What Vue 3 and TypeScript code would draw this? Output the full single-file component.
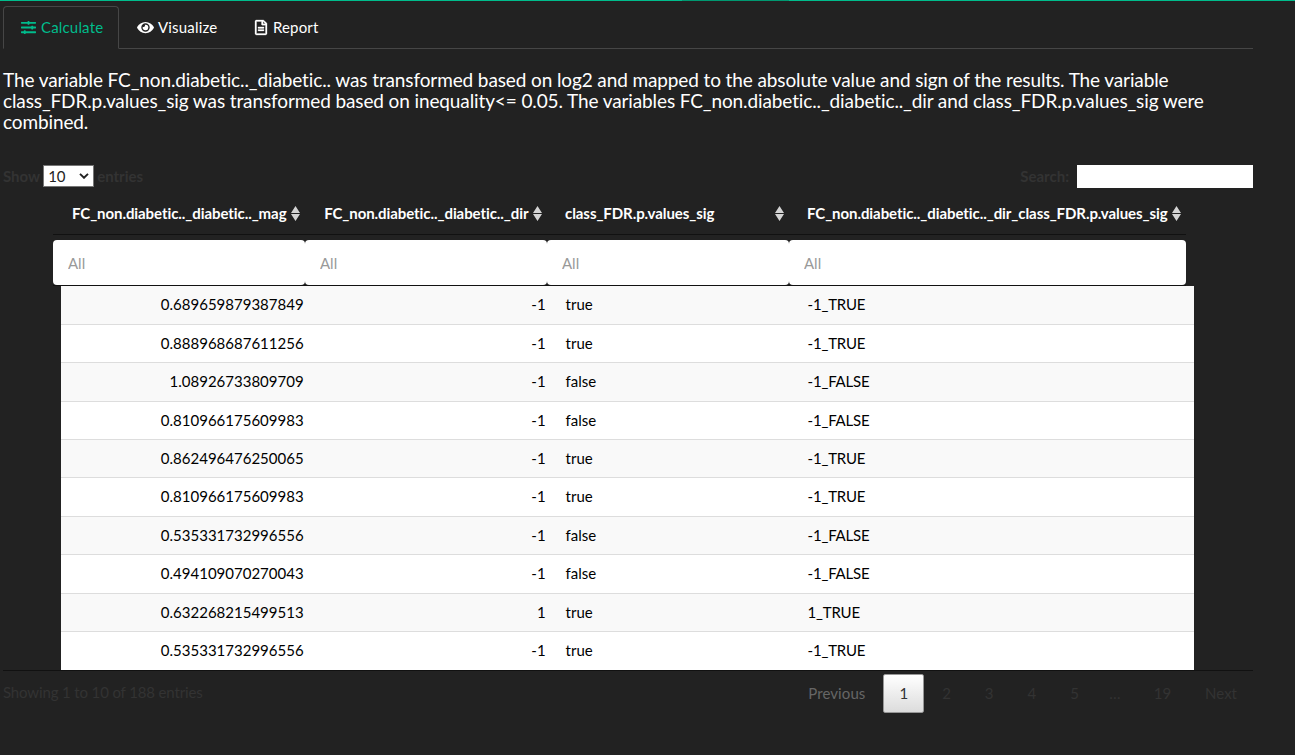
<script setup lang="ts">
import { ref } from 'vue'

interface Column {
  name: string
  numeric: boolean
}

const columns: Column[] = [
  { name: 'FC_non.diabetic.._diabetic.._mag', numeric: true },
  { name: 'FC_non.diabetic.._diabetic.._dir', numeric: true },
  { name: 'class_FDR.p.values_sig', numeric: false },
  { name: 'FC_non.diabetic.._diabetic.._dir_class_FDR.p.values_sig', numeric: false },
]

const rows: string[][] = [
  ['0.689659879387849', '-1', 'true', '-1_TRUE'],
  ['0.888968687611256', '-1', 'true', '-1_TRUE'],
  ['1.08926733809709', '-1', 'false', '-1_FALSE'],
  ['0.810966175609983', '-1', 'false', '-1_FALSE'],
  ['0.862496476250065', '-1', 'true', '-1_TRUE'],
  ['0.810966175609983', '-1', 'true', '-1_TRUE'],
  ['0.535331732996556', '-1', 'false', '-1_FALSE'],
  ['0.494109070270043', '-1', 'false', '-1_FALSE'],
  ['0.632268215499513', '1', 'true', '1_TRUE'],
  ['0.535331732996556', '-1', 'true', '-1_TRUE'],
]

const pages: string[] = ['1', '2', '3', '4', '5', '…', '19']
const currentPage = ref('1')
const search = ref('')
const pageSize = ref('10')
</script>

<template>
  <div class="page">
    <div class="strip"><span class="strip-active"></span></div>
    <main class="content">
      <nav class="tabs">
        <a class="tab active">
          <svg class="icon" width="15" height="15" viewBox="0 0 512 512">
            <path
              fill="currentColor"
              d="M496 384H160v-16c0-8.800-7.200-16-16-16h-32c-8.800 0-16 7.200-16 16v16H16c-8.800 0-16 7.200-16 16v32c0 8.800 7.200 16 16 16h80v16c0 8.800 7.200 16 16 16h32c8.800 0 16-7.200 16-16v-16h336c8.800 0 16-7.200 16-16v-32c0-8.800-7.200-16-16-16zm0-160h-80v-16c0-8.800-7.200-16-16-16h-32c-8.800 0-16 7.200-16 16v16H16c-8.800 0-16 7.200-16 16v32c0 8.800 7.200 16 16 16h336v16c0 8.800 7.200 16 16 16h32c8.800 0 16-7.200 16-16v-16h80c8.800 0 16-7.200 16-16v-32c0-8.800-7.200-16-16-16zm0-160H288V48c0-8.800-7.200-16-16-16h-32c-8.800 0-16 7.200-16 16v16H16C7.200 64 0 71.200 0 80v32c0 8.800 7.200 16 16 16h208v16c0 8.800 7.200 16 16 16h32c8.800 0 16-7.200 16-16v-16h208c8.800 0 16-7.200 16-16V80c0-8.800-7.200-16-16-16z"
            />
          </svg>
          <span>Calculate</span>
        </a>
        <a class="tab visualize">
          <svg class="icon" width="17" height="15" viewBox="0 0 576 512">
            <path
              fill="currentColor"
              d="M572.520 241.400C518.290 135.590 410.930 64 288 64S57.680 135.640 3.480 241.410a32.350 32.350 0 0 0 0 29.190C57.710 376.410 165.070 448 288 448s230.320-71.640 284.520-177.410a32.350 32.350 0 0 0 0-29.190zM288 400a144 144 0 1 1 144-144 143.930 143.930 0 0 1-144 144zm0-240a95.310 95.310 0 0 0-25.310 3.790 47.850 47.850 0 0 1-66.900 66.900A95.780 95.780 0 1 0 288 160z"
            />
          </svg>
          <span>Visualize</span>
        </a>
        <a class="tab report">
          <svg class="icon" width="12" height="15" viewBox="0 0 384 512" preserveAspectRatio="none">
            <path
              fill="currentColor"
              stroke="currentColor"
              stroke-width="10"
              d="M288 248v28c0 6.600-5.400 12-12 12H108c-6.600 0-12-5.400-12-12v-28c0-6.600 5.400-12 12-12h168c6.600 0 12 5.400 12 12zm-12 72H108c-6.600 0-12 5.400-12 12v28c0 6.600 5.400 12 12 12h168c6.600 0 12-5.400 12-12v-28c0-6.600-5.400-12-12-12zm108-188.100V464c0 26.500-21.500 48-48 48H48c-26.500 0-48-21.500-48-48V48C0 21.500 21.500 0 48 0h204.100C264.800 0 277 5.100 286 14.100L369.900 98c9 8.900 14.100 21.200 14.100 33.900zm-128-80V128h76.100L256 51.900zM336 464V176H232c-13.300 0-24-10.700-24-24V48H48v416h288z"
            />
          </svg>
          <span>Report</span>
        </a>
      </nav>

      <h4 class="summary">
        The variable FC_non.diabetic.._diabetic.. was transformed based on log2 and mapped to the absolute value and sign of the results. The variable class_FDR.p.values_sig was transformed based on inequality&lt;= 0.05. The variables FC_non.diabetic.._diabetic.._dir and class_FDR.p.values_sig were combined.
      </h4>

      <div class="controls">
        <label class="length">
          <span>Show</span>
          <span class="select-wrap">
            <select v-model="pageSize" class="size">
              <option>10</option>
              <option>25</option>
            </select>
            <svg class="chevron" width="10" height="6" viewBox="0 0 10 6">
              <path d="M1 .9l4 3.900 4-3.900" fill="none" stroke="#222" stroke-width="1.900" />
            </svg>
          </span>
          <span>entries</span>
        </label>
        <label class="search">
          <span>Search:</span>
          <input v-model="search" type="search" />
        </label>
      </div>

      <div class="head">
        <div class="grid titles">
          <div v-for="col in columns" :key="col.name" class="title" :class="{ numeric: col.numeric }">
            <span>{{ col.name }}</span>
            <svg class="sort" width="9" height="15" viewBox="0 0 9 15">
              <path d="M4.500 0L9 7H0zM0 8h9l-4.500 7z" fill="#d4d4d4" />
            </svg>
          </div>
        </div>
        <div class="grid filters">
          <input v-for="col in columns" :key="col.name" type="text" placeholder="All" />
        </div>
      </div>

      <div class="body">
        <div v-for="(row, i) in rows" :key="i" class="grid row">
          <div v-for="(cell, c) in row" :key="c" class="cell" :class="{ numeric: columns[c].numeric }">{{ cell }}</div>
        </div>
      </div>

      <footer class="foot">
        <div class="info">Showing 1 to 10 of 188 entries</div>
        <div class="pager">
          <a class="page-btn previous">Previous</a>
          <a
            v-for="p in pages"
            :key="p"
            class="page-btn"
            :class="{ current: p === currentPage, gap: p === '…' }"
            >{{ p }}</a
          >
          <a class="page-btn">Next</a>
        </div>
      </footer>
    </main>
  </div>
</template>

<style>
body {
  margin: 0;
  background: #222;
  overflow: hidden;
}
</style>

<style scoped>
.page,
.page * {
  box-sizing: border-box;
}
.page {
  height: 755px;
  background: #222;
  color: #fff;
  font: 15px/21.43px Lato, 'Liberation Sans', sans-serif;
  overflow: hidden;
}
.strip {
  height: 1px;
  background: #00bc8c;
  padding-left: 682px;
}
.strip-active {
  display: block;
  width: 107px;
  height: 1px;
  background: #009871;
}
.content {
  width: 1250px;
  margin-left: 3px;
  padding-top: 5px;
}
.tabs {
  display: flex;
  gap: 2px;
  height: 43px;
  border-bottom: 1px solid #464646;
}
.tab {
  display: flex;
  align-items: center;
  gap: 4px;
  height: 43px;
  padding: 0 15px;
  border: 1px solid transparent;
  border-radius: 4px 4px 0 0;
  letter-spacing: 0.17px;
  white-space: nowrap;
}
.tab.active {
  width: 116px;
  gap: 5px;
  padding: 0 0 0 17px;
  color: #00bc8c;
  background: #222;
  border-color: #464646 #464646 #222;
}
.tab.report {
  gap: 6px;
  padding-left: 18.6px;
}
.icon {
  flex: none;
  overflow: visible;
}
.summary {
  margin: 21px -10px 0 0;
  font-size: 19px;
  font-weight: 400;
  line-height: 20.9px;
  letter-spacing: -0.114px;
}
.controls {
  display: flex;
  justify-content: space-between;
  height: 24px;
  margin-top: 32px;
  color: #333;
  font-weight: 700;
}
.length,
.search {
  display: flex;
  align-items: center;
}
.length {
  gap: 3px;
}
.select-wrap {
  position: relative;
  height: 22px;
  margin-top: -2px;
}
.size {
  display: block;
  width: 51px;
  height: 22px;
  padding: 0 0 0 4px;
  border: 1px solid #767676;
  border-radius: 0;
  background: #fff;
  color: #222;
  font: 15px Lato, sans-serif;
  appearance: none;
}
.chevron {
  position: absolute;
  right: 5px;
  top: 8px;
}
.search input {
  width: 176px;
  height: 23px;
  margin-left: 8px;
  padding: 1px 2px;
  border: 0;
  background: #fff;
  font: inherit;
}
.grid {
  display: grid;
  grid-template-columns: 252px 242px 242px 397px;
}
.head {
  width: 1133px;
  height: 97px;
  margin: 0 0 0 50px;
  border-bottom: 1px solid #111;
}
.titles {
  height: 46px;
  border-bottom: 1px solid #111;
}
.title {
  display: flex;
  align-items: center;
  justify-content: space-between;
  padding: 4px 5px 0 18px;
  font-weight: 700;
  letter-spacing: -0.07px;
  white-space: nowrap;
}
.title.numeric {
  justify-content: flex-end;
  gap: 4.5px;
}
.filters {
  padding-top: 5px;
}
.filters input {
  width: 100%;
  height: 45px;
  padding: 2px 15px 0;
  border: 0;
  border-radius: 4px;
  background: #fff;
  color: #464646;
  font: inherit;
}
.filters input::placeholder {
  color: #999;
  opacity: 1;
}
.body {
  width: 1133px;
  height: 384px;
  margin-left: 58px;
  background: #fff;
  color: #000;
}
.row {
  height: 38.42px;
  border-top: 1px solid #ddd;
  background: #fff;
}
.row:first-child {
  border-top: 0;
  height: 38px;
}
.row:nth-child(odd) {
  background: #f9f9f9;
}
.cell {
  padding: 8px 9.4px 8px 10.6px;
}
.cell:last-child {
  letter-spacing: -0.2px;
}
.numeric {
  text-align: right;
}
.foot {
  display: flex;
  justify-content: space-between;
  border-top: 1px solid #111;
  color: #333;
}
.info {
  padding-top: 11px;
  letter-spacing: -0.14px;
}
.pager {
  display: flex;
  gap: 2px;
  padding-top: 3px;
}
.page-btn {
  height: 39px;
  padding: 8px 15px;
  border: 1px solid transparent;
  border-radius: 2px;
}
.page-btn.gap {
  padding: 8px 14.2px 8px 11.3px;
}
.page-btn.previous {
  color: #666;
  letter-spacing: 0.1px;
}
.page-btn.current {
  border-color: #979797;
  background: linear-gradient(#fff, #dcdcdc);
  color: #333;
}
</style>
